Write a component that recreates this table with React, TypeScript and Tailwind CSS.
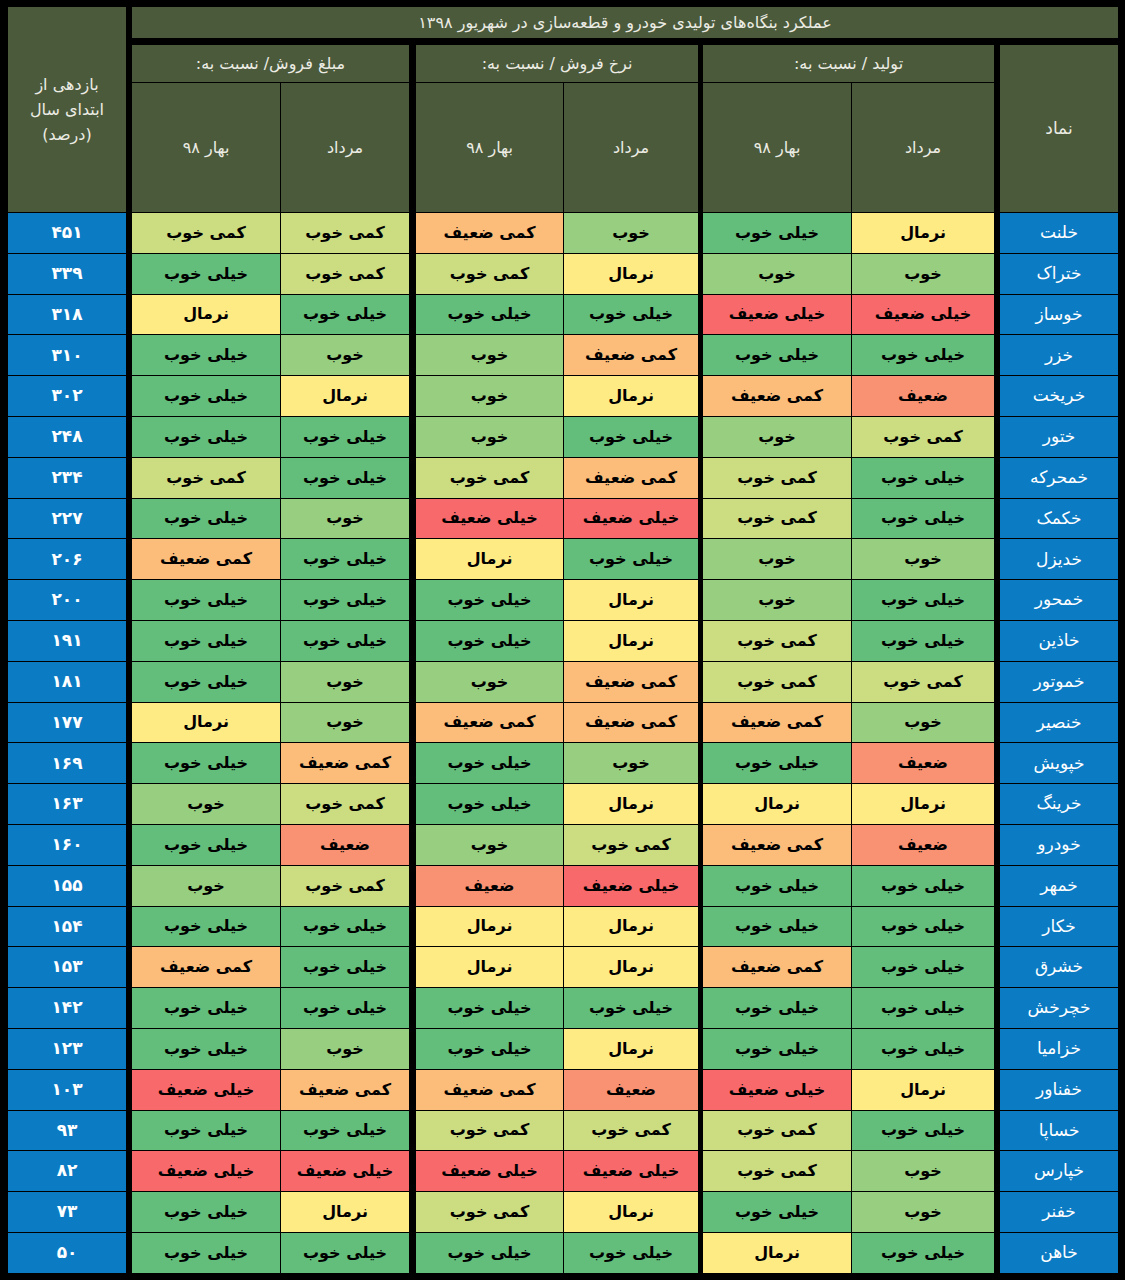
const tone: Record<string, string> = {
  "خیلی خوب": "bg-[#63be7b]",
  "خوب": "bg-[#98ce7f]",
  "کمی خوب": "bg-[#cbdc81]",
  "نرمال": "bg-[#ffeb84]",
  "کمی ضعیف": "bg-[#fcbd7b]",
  "ضعیف": "bg-[#f99272]",
  "خیلی ضعیف": "bg-[#f8696b]",
};

// namad, tolid (mordad, bahar), narkh (mordad, bahar), mablagh (mordad, bahar), yield
const rows: [string, string, string, string, string, string, string, string][] = [
  ["خلنت", "نرمال", "خیلی خوب", "خوب", "کمی ضعیف", "کمی خوب", "کمی خوب", "۴۵۱"],
  ["ختراک", "خوب", "خوب", "نرمال", "کمی خوب", "کمی خوب", "خیلی خوب", "۳۳۹"],
  ["خوساز", "خیلی ضعیف", "خیلی ضعیف", "خیلی خوب", "خیلی خوب", "خیلی خوب", "نرمال", "۳۱۸"],
  ["خزر", "خیلی خوب", "خیلی خوب", "کمی ضعیف", "خوب", "خوب", "خیلی خوب", "۳۱۰"],
  ["خریخت", "ضعیف", "کمی ضعیف", "نرمال", "خوب", "نرمال", "خیلی خوب", "۳۰۲"],
  ["ختور", "کمی خوب", "خوب", "خیلی خوب", "خوب", "خیلی خوب", "خیلی خوب", "۲۴۸"],
  ["خمحرکه", "خیلی خوب", "کمی خوب", "کمی ضعیف", "کمی خوب", "خیلی خوب", "کمی خوب", "۲۳۴"],
  ["خکمک", "خیلی خوب", "کمی خوب", "خیلی ضعیف", "خیلی ضعیف", "خوب", "خیلی خوب", "۲۲۷"],
  ["خدیزل", "خوب", "خوب", "خیلی خوب", "نرمال", "خیلی خوب", "کمی ضعیف", "۲۰۶"],
  ["خمحور", "خیلی خوب", "خوب", "نرمال", "خیلی خوب", "خیلی خوب", "خیلی خوب", "۲۰۰"],
  ["خاذین", "خیلی خوب", "کمی خوب", "نرمال", "خیلی خوب", "خیلی خوب", "خیلی خوب", "۱۹۱"],
  ["خموتور", "کمی خوب", "کمی خوب", "کمی ضعیف", "خوب", "خوب", "خیلی خوب", "۱۸۱"],
  ["خنصیر", "خوب", "کمی ضعیف", "کمی ضعیف", "کمی ضعیف", "خوب", "نرمال", "۱۷۷"],
  ["خپویش", "ضعیف", "خیلی خوب", "خوب", "خیلی خوب", "کمی ضعیف", "خیلی خوب", "۱۶۹"],
  ["خرینگ", "نرمال", "نرمال", "نرمال", "خیلی خوب", "کمی خوب", "خوب", "۱۶۳"],
  ["خودرو", "ضعیف", "کمی ضعیف", "کمی خوب", "خوب", "ضعیف", "خیلی خوب", "۱۶۰"],
  ["خمهر", "خیلی خوب", "خیلی خوب", "خیلی ضعیف", "ضعیف", "کمی خوب", "خوب", "۱۵۵"],
  ["خکار", "خیلی خوب", "خیلی خوب", "نرمال", "نرمال", "خیلی خوب", "خیلی خوب", "۱۵۴"],
  ["خشرق", "خیلی خوب", "کمی ضعیف", "نرمال", "نرمال", "خیلی خوب", "کمی ضعیف", "۱۵۳"],
  ["خچرخش", "خیلی خوب", "خیلی خوب", "خیلی خوب", "خیلی خوب", "خیلی خوب", "خیلی خوب", "۱۴۲"],
  ["خزامیا", "خیلی خوب", "خیلی خوب", "نرمال", "خیلی خوب", "خوب", "خیلی خوب", "۱۲۳"],
  ["خفناور", "نرمال", "خیلی ضعیف", "ضعیف", "کمی ضعیف", "کمی ضعیف", "خیلی ضعیف", "۱۰۳"],
  ["خساپا", "خیلی خوب", "کمی خوب", "کمی خوب", "کمی خوب", "خیلی خوب", "خیلی خوب", "۹۳"],
  ["خپارس", "خوب", "کمی خوب", "خیلی ضعیف", "خیلی ضعیف", "خیلی ضعیف", "خیلی ضعیف", "۸۲"],
  ["خفنر", "خوب", "خیلی خوب", "نرمال", "کمی خوب", "نرمال", "خیلی خوب", "۷۳"],
  ["خاهن", "خیلی خوب", "نرمال", "خیلی خوب", "خیلی خوب", "خیلی خوب", "خیلی خوب", "۵۰"],
];

const cols = [
  "w-[142px] ml-px",
  "w-[148px] ml-[5px]",
  "w-[134px] ml-px",
  "w-[147px] ml-[7px]",
  "w-[128px] ml-px",
  "w-[148px] ml-[6px]",
];

const groups = [
  { title: "تولید / نسبت به:", w: "w-[291px] ml-[5px]", a: "w-[142px]", b: "w-[148px]" },
  { title: "نرخ فروش / نسبت به:", w: "w-[282px] ml-[7px]", a: "w-[134px]", b: "w-[147px]" },
  { title: "مبلغ فروش/ نسبت به:", w: "w-[277px]", a: "w-[128px]", b: "w-[148px]" },
];

const olive = "bg-[#4b5a3b] text-[#ecece4]";

function Group({ g }: { g: (typeof groups)[number] }) {
  return (
    <div className={`${g.w} flex flex-col`}>
      <div className={`${olive} h-[37px] flex items-center justify-center text-[16px]`}>{g.title}</div>
      <div className="mt-px flex h-[129px]">
        <div className={`${olive} ${g.a} ml-px flex items-center justify-center text-[16px]`}>مرداد</div>
        <div className={`${olive} ${g.b} flex items-center justify-center text-[16px]`}>بهار ۹۸</div>
      </div>
    </div>
  );
}

export default function App() {
  return (
    <div
      dir="rtl"
      className="w-[1125px] h-[1280px] bg-black pt-[7px] pr-[7px] overflow-hidden"
      style={{ fontFamily: '"DejaVu Sans", sans-serif' }}
    >
      <div className="flex">
        <div className="w-[986px] ml-[6px]">
          <div className={`${olive} h-[31px] flex items-center justify-center text-[16px]`}>
            عملکرد بنگاه‌های تولیدی خودرو و قطعه‌سازی در شهریور ۱۳۹۸
          </div>
          <div className="mt-[7px] flex h-[167px]">
            <div className={`${olive} w-[118px] ml-[6px] flex items-center justify-center text-[17px]`}>نماد</div>
            {groups.map((g) => (
              <Group key={g.title} g={g} />
            ))}
          </div>
        </div>
        <div className={`${olive} w-[118px] h-[205px] flex items-center justify-center text-center text-[16px] leading-[25px]`}>
          بازدهی از
          <br />
          ابتدای سال
          <br />
          (درصد)
        </div>
      </div>

      <div className="mt-px flex flex-col gap-px">
        {rows.map((r) => (
          <div key={r[0]} className="flex h-[39.8px]">
            <div className="w-[118px] ml-[6px] bg-[#0b7bc4] text-white flex items-center justify-center text-[17px]">
              {r[0]}
            </div>
            {cols.map((c, i) => (
              <div
                key={i}
                className={`${c} ${tone[r[i + 1]]} text-black font-bold flex items-center justify-center text-[16px]`}
              >
                {r[i + 1]}
              </div>
            ))}
            <div className="w-[118px] bg-[#0b7bc4] text-white font-bold flex items-center justify-center text-[17px]">
              {r[7]}
            </div>
          </div>
        ))}
      </div>
    </div>
  );
}
